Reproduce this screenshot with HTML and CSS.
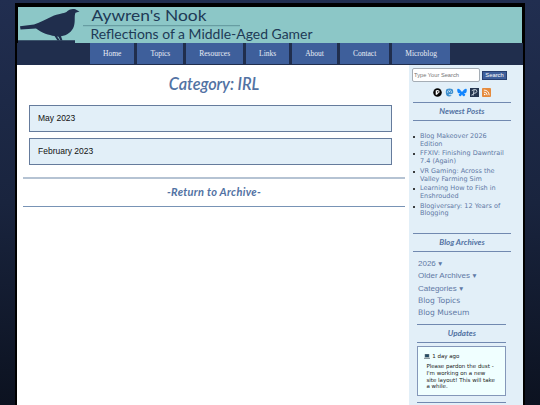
FILE: index.html
```
<!DOCTYPE html>
<html lang="en">
<head>
    <meta charset="UTF-8">
    <meta name="viewport" content="width=device-width, initial-scale=1.0">
    <title>Category: IRL - Aywren's Nook</title>
    <link rel="stylesheet" href="styles.css">
</head>
<body>
    <div class="container">
        <header class="banner">
            <svg viewBox="0 0 504 36" width="504" height="36" role="img" aria-label="Aywren's Nook">
                <path class="ink" d="M0 33.2H57V36H0z"/>
                <path class="ink" d="M2 19.3L16 17.5C22 15.5 29 11.500 36 8.500C43 6 47 6.800 49.500 4C52 1.500 57 1.300 59 3.300L61.500 4.500L57.500 5.800C56 9 57.500 14 56 19C54 25 49 28.500 43 29.200L44.500 33.500H42.500L40.500 29.700L39 29.500L42 33.500H39.500L36.500 29C31 28.200 24 26 18 21.500L2.500 22.600z"/>
                <path class="rule" d="M65 18.700H222"/>
                <text x="73.500" y="13.800" textLength="115" lengthAdjust="spacingAndGlyphs" class="title">Aywren's Nook</text>
                <text x="72.500" y="31.500" textLength="222" lengthAdjust="spacingAndGlyphs" class="tagline">Reflections of a Middle-Aged Gamer</text>
            </svg>
        </header>

        <nav class="menu">
            <a>Home</a>
            <a>Topics</a>
            <a>Resources</a>
            <a>Links</a>
            <a>About</a>
            <a>Contact</a>
            <a>Microblog</a>
        </nav>

        <div class="columns">
            <main class="content">
                <h1>Category: IRL</h1>
                <div class="month">May 2023</div>
                <div class="month">February 2023</div>
                <div class="return"><a>-Return to Archive-</a></div>
            </main>

            <aside class="sidebar">
                <form class="search">
                    <input type="text" placeholder="Type Your Search">
                    <button type="button">Search</button>
                </form>

                <div class="social">
                    <svg viewBox="0 0 20 20"><circle cx="10" cy="10" r="9.500" fill="#050505"/><path fill="#fff" d="M6 5.500Q10 3 14 6Q16 11 11 12L9 15H6z"/><path fill="#050505" d="M9 7h3v3H9z"/></svg>
                    <svg viewBox="0 0 20 20"><path fill="#3d8fce" d="M4 2Q10 0 16 2Q19 4 18 11Q17 14 8 14Q8 17 14 16V18Q3 21 2 12Q1 4 4 2z"/><path fill="none" stroke="#e2eff8" stroke-width="1.500" d="M6 11V7Q8 3.500 10 7V9V7Q12 3.500 14 7V11"/></svg>
                    <svg viewBox="0 0 20 20" class="wide"><path fill="#1185fe" d="M10 9C8 5 3 1 1 1.500C-1 2-1 5 0 9C1 12 4 12 6 12C2 13 2 15 4 17C7 20 9 17 10 14C11 17 13 20 16 17C18 15 18 13 14 12C16 12 19 12 20 9C21 5 21 2 19 1.500C17 1 12 5 10 9z"/></svg>
                    <svg viewBox="0 0 20 20"><path fill="#26364f" d="M0 0h20v20H0z"/><path fill="none" stroke="#dce6ee" stroke-width="1.800" d="M7 17L9 4M4 6Q9 2 14 4Q17 8 13 11L8 12M3 16L7 14"/></svg>
                    <svg viewBox="0 0 20 20"><rect width="20" height="20" rx="2" fill="#e58a3c"/><circle cx="6" cy="14.500" r="1.800" fill="#fff"/><path fill="none" stroke="#fff" stroke-width="2" d="M4 9Q11 9 11.500 16M4 4.500Q15 5 16 16"/></svg>
                </div>

                <h2>Newest Posts</h2>
                <ul class="posts">
                    <li>Blog Makeover 2026<br>Edition</li>
                    <li>FFXIV: Finishing Dawntrail<br>7.4 (Again)</li>
                    <li>VR Gaming: Across the<br>Valley Farming Sim</li>
                    <li>Learning How to Fish in<br>Enshrouded</li>
                    <li>Blogiversary: 12 Years of<br>Blogging</li>
                </ul>

                <h2>Blog Archives</h2>
                <div class="archives">
                    <a class="drop">2026 <span>▼</span></a>
                    <a class="drop">Older Archives <span>▼</span></a>
                    <a class="drop">Categories <span>▼</span></a>
                    <a>Blog Topics</a>
                    <a>Blog Museum</a>
                </div>

                <div class="updates">
                    <h2>Updates</h2>
                    <div class="status">
                        <div class="when">
                            <svg viewBox="0 0 12 10"><path fill="#66757d" d="M1.500 0h9v7h-9z"/><path fill="#244b64" d="M2.500 1h7v5h-7z"/><path fill="#8c9aa0" d="M0 7.500h12V10H0z"/></svg>
                            1 day ago
                        </div>
                        <p>Please pardon the dust -<br>I'm working on a new<br>site layout! This will take<br>a while.</p>
                    </div>
                    <hr>
                </div>
            </aside>
        </div>
    </div>
</body>
</html>
```
FILE: styles.css
```
* {
    margin: 0;
    padding: 0;
    box-sizing: border-box;
}

body {
    height: 405px;
    overflow: hidden;
    padding: 3px 15px 0;
    background: linear-gradient(#212e50, #19243e 50%, #0c1220);
    font-family: "Liberation Sans", Arial, sans-serif;
}

.container {
    width: 510px;
    height: 420px;
    border: 2px solid #000;
    border-top-width: 3px;
    background: #fff;
}

.banner {
    height: 37px;
    padding: 1px 1px 0;
    border-bottom: 1px solid #000;
    background: #000;
}

.banner svg {
    display: block;
    background: #8cc7c7;
}

.ink {
    fill: #202e4d;
}

.rule {
    stroke: #5f9399;
    stroke-width: 1;
}

.title,
.tagline {
    font-family: Lato, sans-serif;
    fill: #203a56;
}

.title {
    font-size: 15px;
}

.tagline {
    font-size: 13px;
}

.menu {
    display: flex;
    justify-content: center;
    gap: 3px;
    height: 22px;
    background: #202e4d;
}

.menu a {
    height: 21px;
    padding: 0 13px;
    background: #3e5f9b;
    color: #e9eef6;
    font: 7.5px/21px "Liberation Serif", "Times New Roman", serif;
}

.columns {
    display: flex;
    height: 360px;
}

.content {
    width: 392px;
    padding: 0 4px 0 6px;
}

h1,
h2,
.return {
    font-family: Lato, sans-serif;
    font-style: italic;
    font-weight: bold;
    text-align: center;
    color: #5272a3;
}

h1 {
    padding-top: 7px;
    margin-bottom: 9px;
    font-size: 16.3px;
    font-weight: 600;
    line-height: 24px;
    letter-spacing: -0.1px;
}

.month {
    width: 363px;
    height: 27px;
    margin: 0 0 6px 6px;
    padding-left: 8px;
    border: 1px solid #657b9c;
    background: #e2eff8;
    color: #111;
    font-size: 8.5px;
    line-height: 25px;
}

.return {
    height: 30px;
    margin-top: 12px;
    border-top: 2px solid #b5c3d3;
    border-bottom: 1px solid #7893b5;
    font-size: 11px;
    line-height: 25px;
    letter-spacing: 0.3px;
}

.sidebar {
    width: 114px;
    padding: 3px 12px 0 4px;
    background: #e2eff8;
}

.search {
    display: flex;
    align-items: center;
    gap: 2px;
    width: 96px;
    margin-left: -1px;
}

.search input {
    width: 68px;
    height: 14px;
    padding: 0 1px;
    border: 1px solid #a5adb5;
    border-radius: 2px;
    background: #fff;
    font: 5.7px "Liberation Sans", sans-serif;
}

.search button {
    width: 25px;
    height: 9px;
    border: 1px solid #273f70;
    background: #3e5f9b;
    color: #fff;
    font: 5.8px/7px "Liberation Sans", sans-serif;
}

.social {
    display: flex;
    justify-content: center;
    gap: 3px;
    height: 20px;
    padding-top: 6px;
}

.social svg {
    width: 9px;
    height: 9px;
}

.social .wide {
    width: 10px;
}

h2 {
    height: 19px;
    border-top: 1px solid #7189b0;
    border-bottom: 1px solid #7189b0;
    font-size: 8px;
    line-height: 17px;
}

.posts {
    height: 101px;
    margin: 0 -8px 11px 7px;
    padding-top: 12px;
    list-style: none;
    color: #5f79a5;
    font: 6.5px/7.7px "DejaVu Sans", Verdana, sans-serif;
}

.posts li {
    position: relative;
    margin-bottom: 2px;
}

.posts li::before {
    content: "";
    position: absolute;
    left: -7px;
    top: 3px;
    width: 2px;
    height: 2px;
    border-radius: 50%;
    background: #000;
}

.archives {
    padding: 6px 0 0 5px;
    color: #5f79a5;
}

.archives a {
    display: block;
    height: 12.3px;
    font: 7.6px/12.3px "DejaVu Sans", Verdana, sans-serif;
}

.archives .drop {
    font: 8px/12.3px "Liberation Sans", Arial, sans-serif;
}

.archives span {
    margin-left: -1px;
    font-size: 6.5px;
}

.updates {
    width: 89px;
    margin: 4.5px 0 0 4.4px;
}

.status {
    height: 50px;
    margin: 3px 0 6px;
    padding: 6px 0 0 6px;
    border: 1px solid #8497b9;
    background: #f0ffff;
    color: #222;
    font: 5.5px/6.8px "DejaVu Sans", Verdana, sans-serif;
}

.when {
    height: 10px;
}

.when svg {
    width: 6px;
    height: 5px;
    vertical-align: -1px;
}

.status p {
    padding-left: 2px;
}

hr {
    border: 0;
    border-top: 1px solid #7189b0;
}
```
